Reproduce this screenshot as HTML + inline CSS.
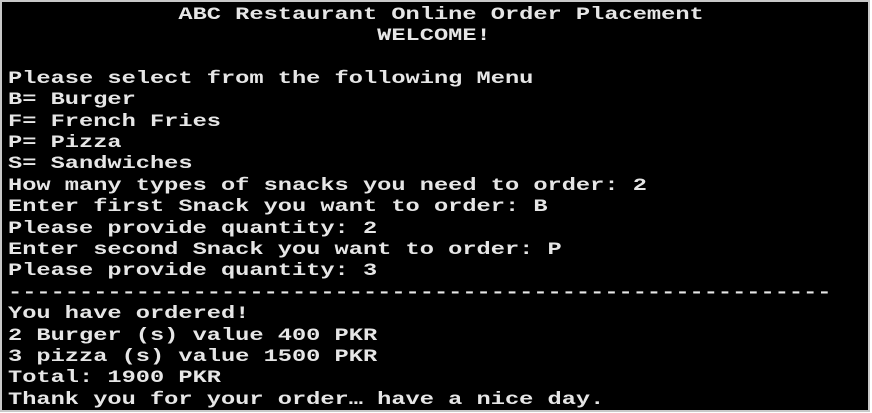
<!DOCTYPE html>
<html><head><meta charset="utf-8"><style>
html,body{margin:0;padding:0;background:#fff;width:872px;height:413px;overflow:hidden}
#f{position:absolute;left:0;top:0;width:866px;height:408px;background:#000;border:2px solid #c8c8c8;overflow:hidden}
pre{position:absolute;left:6px;top:2.5px;margin:0;font-family:"Liberation Mono",monospace;font-weight:bold;font-size:17.5px;line-height:21.4px;color:#e6e6e6;transform:scaleX(1.352);transform-origin:0 0;white-space:pre}
</style></head><body><div id="f"><pre>            ABC Restaurant Online Order Placement
                          WELCOME!

Please select from the following Menu
B= Burger
F= French Fries
P= Pizza
S= Sandwiches
How many types of snacks you need to order: 2
Enter first Snack you want to order: B
Please provide quantity: 2
Enter second Snack you want to order: P
Please provide quantity: 3
----------------------------------------------------------
You have ordered!
2 Burger (s) value 400 PKR
3 pizza (s) value 1500 PKR
Total: 1900 PKR
Thank you for your order… have a nice day.</pre></div></body></html>
